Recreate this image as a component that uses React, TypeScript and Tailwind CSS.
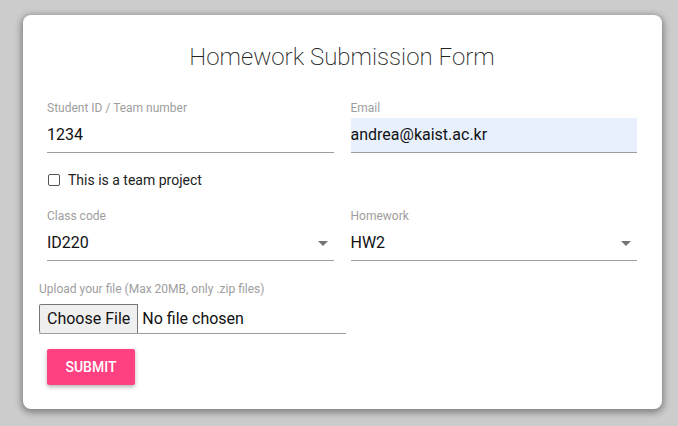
export default function App() {
  return (
    <div className="min-h-[426px] w-[678px] bg-[#cccccc] pt-[15px] font-['Roboto',sans-serif]">
      <div className="ml-[23px] h-[394px] w-[639px] rounded-[8px] bg-white pl-[24px] pr-[25px] pt-[26px] shadow-[0_2px_6px_2px_rgba(0,0,0,0.35)]">
        <h1 className="text-center text-[24px] font-[200] leading-[32px] text-[#222]">
          Homework Submission Form
        </h1>

        <div className="mt-[28px] grid grid-cols-2 gap-x-[17px]">
          <Field label="Student ID / Team number" value="1234" />
          <Field label="Email" value="andrea@kaist.ac.kr" filled />
        </div>

        <label className="mt-[19px] flex items-center gap-[8px] text-[14px] leading-[16px] text-[#222]">
          <span className="ml-[1px] h-[12px] w-[12px] rounded-[2px] border border-[#555]" />
          This is a team project
        </label>

        <div className="mt-[21px] grid grid-cols-2 gap-x-[17px]">
          <SelectField label="Class code" value="ID220" />
          <SelectField label="Homework" value="HW2" />
        </div>

        <div className="-ml-[8px] mt-[21px]">
          <div className="text-[12px] leading-[14px] text-[#9e9e9e]">
            Upload your file (Max 20MB, only .zip files)
          </div>
          <div className="mt-[8px] flex h-[30px] w-[307px] items-stretch border-b border-[#9e9e9e]">
            <span className="flex items-center rounded-l-[2px] border border-b-0 border-[#767676] bg-[#efefef] px-[7px] text-[16px] text-[#111]">
              Choose File
            </span>
            <span className="flex items-center pl-[4px] text-[16px] text-[#111]">No file chosen</span>
          </div>
        </div>

        <button className="mt-[15px] h-[36px] w-[88px] rounded-[2px] bg-[#ff4081] text-[14px] font-medium text-white shadow-[0_2px_4px_rgba(0,0,0,0.3)]">
          SUBMIT
        </button>
      </div>
    </div>
  )
}

function Field({ label, value, filled }: { label: string; value: string; filled?: boolean }) {
  return (
    <div>
      <div className="text-[12px] leading-[14px] text-[#9e9e9e]">{label}</div>
      <div
        className={
          filled
            ? 'mt-[3px] flex h-[35px] items-center border-b border-[#9e9e9e] bg-[#e8f0fe] text-[16px] text-[#111]'
            : 'mt-[3px] flex h-[35px] items-center border-b border-[#9e9e9e] text-[16px] text-[#111]'
        }
      >
        {value}
      </div>
    </div>
  )
}

function SelectField({ label, value }: { label: string; value: string }) {
  return (
    <div>
      <div className="text-[12px] leading-[14px] text-[#9e9e9e]">{label}</div>
      <div className="mt-[3px] flex h-[35px] items-center justify-between border-b border-[#9e9e9e] text-[16px] text-[#111]">
        <span>{value}</span>
        <svg width="10" height="5" viewBox="0 0 10 5" className="mr-[6px]">
          <path d="M0 0h10L5 5z" fill="#757575" />
        </svg>
      </div>
    </div>
  )
}
